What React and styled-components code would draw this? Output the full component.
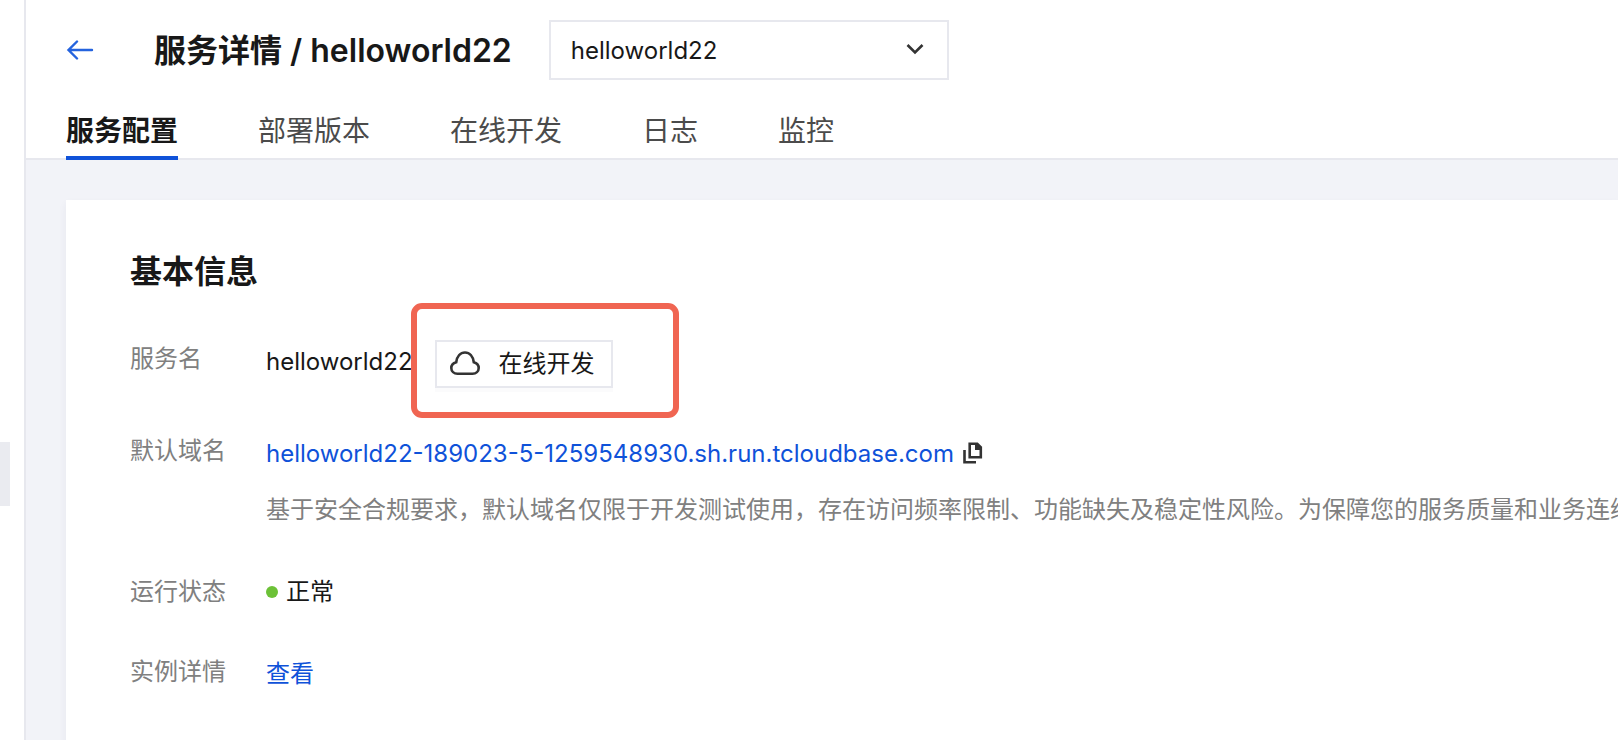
import React from 'react';
import styled, { createGlobalStyle } from 'styled-components';

const colors = {
  blue: '#0f52d9',
  text: '#181818',
  tab: '#4b4b4b',
  muted: '#808080',
  line: '#e7e8ee',
  page: '#f2f3f8',
  green: '#6cc137',
  mark: '#f06552',
};

const GlobalStyle = createGlobalStyle`
  * {
    box-sizing: border-box;
  }

  body {
    background: #fff;
    color: ${colors.text};
    font-family: Inter, "Noto Sans CJK SC", sans-serif;
    font-size: 24px;
    line-height: 40px;
    margin: 0;
    overflow-x: hidden;
  }

  button, select {
    color: inherit;
    font: inherit;
  }
`;

const Page = styled.div`
  display: flex;
  min-height: 100vh;
`;

const Sidebar = styled.aside`
  background: #fff;
  border-right: 2px solid ${colors.line};
  flex: 0 0 26px;
  padding-top: 442px;
`;

const SidebarItem = styled.div`
  background: #eaebf0;
  height: 64px;
  width: 10px;
`;

const Main = styled.div`
  background: ${colors.page};
  display: flex;
  flex: 1;
  flex-direction: column;
  min-width: 0;
`;

const Header = styled.header`
  background: #fff;
  border-bottom: 2px solid ${colors.line};
  padding: 20px 40px 0;
`;

const TitleRow = styled.div`
  align-items: center;
  display: flex;
`;

const BackLink = styled.a`
  color: #2463de;
  display: flex;
  margin-right: 60px;
`;

const Title = styled.h1`
  font-size: 32px;
  font-weight: 600;
  margin: 0 37px 0 0;
  padding-top: 2px;
  white-space: nowrap;
`;

const SelectBox = styled.div`
  position: relative;
  width: 400px;

  svg {
    pointer-events: none;
    position: absolute;
    right: 25px;
    top: 22px;
  }
`;

const Select = styled.select`
  appearance: none;
  background: #fff;
  border: 2px solid ${colors.line};
  border-radius: 0;
  height: 60px;
  padding: 2px 60px 0 20px;
  width: 100%;
`;

const Tabs = styled.nav`
  display: flex;
  gap: 80px;
  margin: 28px 0 -2px;
`;

const Tab = styled.a`
  border-bottom: 4px solid ${(props) => (props.$active ? colors.blue : 'transparent')};
  color: ${(props) => (props.$active ? colors.text : colors.tab)};
  font-size: 28px;
  font-weight: ${(props) => (props.$active ? 700 : 400)};
  height: 52px;
  line-height: 46px;
  text-decoration: none;
`;

const Card = styled.section`
  background: #fff;
  box-shadow: 0 4px 8px rgba(54, 58, 80, .06);
  flex: 1;
  margin: 40px 0 0 40px;
  overflow: hidden;
  padding: 52px 0 40px 64px;
`;

const CardTitle = styled.h2`
  font-size: 32px;
  font-weight: 700;
  margin: 0 0 47px;
`;

const List = styled.dl`
  margin: 0;
`;

const Row = styled.div`
  display: flex;
  margin-bottom: ${(props) => props.$gap || 40}px;
`;

const Label = styled.dt`
  color: ${colors.muted};
  flex: 0 0 136px;
`;

const Value = styled.dd`
  margin: 0;
  padding-top: ${(props) => props.$top || 0}px;
`;

const Inline = styled.div`
  align-items: ${(props) => props.$align || 'center'};
  display: flex;
`;

const ServiceName = styled.span`
  line-height: 44px;
`;

const Link = styled.a`
  color: ${colors.blue};
  display: block;
  text-decoration: none;
`;

const CopyButton = styled.button`
  background: none;
  border: 0;
  display: flex;
  margin-left: 9px;
  padding: 0 0 2px;
`;

const Hint = styled.p`
  color: ${colors.muted};
  margin: 16px 0 0;
  white-space: nowrap;
`;

const Marked = styled.div`
  margin-left: 22px;
  position: relative;

  &::after {
    border: 6px solid ${colors.mark};
    border-radius: 11px;
    content: '';
    inset: -37px -66px -30px -24px;
    pointer-events: none;
    position: absolute;
  }
`;

const DevButton = styled.button`
  align-items: center;
  background: #fff;
  border: 2px solid ${colors.line};
  box-shadow: 0 4px 0 #fbfbfc;
  display: flex;
  gap: 18px;
  height: 48px;
  padding: 0 16px 0 12px;
  white-space: nowrap;
`;

const Dot = styled.span`
  background: ${colors.green};
  border-radius: 50%;
  height: 12px;
  margin-right: 8px;
  width: 12px;
`;

const tabs = ['服务配置', '部署版本', '在线开发', '日志', '监控'];

function BackIcon() {
  return (
    <svg width="28" height="20" viewBox="0 0 28 20" fill="none" stroke="currentColor" strokeWidth="2.4" strokeLinecap="round" aria-hidden="true">
      <path d="M26 10H3M11 1.500L2.500 10l8.500 8.500" />
    </svg>
  );
}

function ChevronIcon() {
  return (
    <svg width="18" height="14" viewBox="0 0 18 14" fill="none" stroke="#333" strokeWidth="2.6" aria-hidden="true">
      <path d="M1.500 3L9 10.500 16.500 3" />
    </svg>
  );
}

function CloudIcon() {
  return (
    <svg width="32" height="26" viewBox="0 0 32 26" fill="none" stroke="#333" strokeWidth="2.6" aria-hidden="true">
      <path d="M8.500 22.800h15c3.600 0 6.200-2.500 6.200-5.700 0-2.900-1.800-5-4.900-5.800C24 5.500 20.600 1.500 16 1.500S8 5.500 7.200 11.300c-3.100.8-4.900 2.900-4.900 5.800 0 3.200 2.600 5.700 6.200 5.700z" />
    </svg>
  );
}

function CopyIcon() {
  return (
    <svg width="20" height="22" viewBox="0 0 20 22" fill="none" stroke="#333" strokeWidth="2.6" aria-hidden="true">
      <path d="M6.700 1.700h7.500l3.600 3.600v10H6.700z" />
      <path d="M12 1.500h2l4 4v2.500h-6z" fill="#333" stroke="none" />
      <path d="M1.500 8v12.200h11.500" />
    </svg>
  );
}

function ServiceHeader() {
  return (
    <Header>
      <TitleRow>
        <BackLink href="#services" aria-label="返回"><BackIcon /></BackLink>
        <Title>服务详情 / helloworld22</Title>
        <SelectBox>
          <Select aria-label="服务" defaultValue="helloworld22">
            <option value="helloworld22">helloworld22</option>
          </Select>
          <ChevronIcon />
        </SelectBox>
      </TitleRow>
      <Tabs>
        {tabs.map((tab, i) => (
          <Tab key={tab} href={`#tab-${i}`} $active={i === 0}>{tab}</Tab>
        ))}
      </Tabs>
    </Header>
  );
}

function BasicInfo() {
  return (
    <Card>
      <CardTitle>基本信息</CardTitle>
      <List>
        <Row $gap={43}>
          <Label>服务名</Label>
          <Value $top={1}>
            <Inline $align="flex-start">
              <ServiceName>helloworld22</ServiceName>
              <Marked>
                <DevButton type="button">
                  <CloudIcon />
                  在线开发
                </DevButton>
              </Marked>
            </Inline>
          </Value>
        </Row>
        <Row $gap={42}>
          <Label>默认域名</Label>
          <Value $top={3}>
            <Inline>
              <Link href="#domain">helloworld22-189023-5-1259548930.sh.run.tcloudbase.com</Link>
              <CopyButton type="button" aria-label="复制"><CopyIcon /></CopyButton>
            </Inline>
            <Hint>基于安全合规要求，默认域名仅限于开发测试使用，存在访问频率限制、功能缺失及稳定性风险。为保障您的服务质量和业务连续</Hint>
          </Value>
        </Row>
        <Row>
          <Label>运行状态</Label>
          <Value>
            <Inline>
              <Dot />
              正常
            </Inline>
          </Value>
        </Row>
        <Row>
          <Label>实例详情</Label>
          <Value $top={2}><Link href="#instances">查看</Link></Value>
        </Row>
      </List>
    </Card>
  );
}

function App() {
  return (
    <>
      <GlobalStyle />
      <Page lang="zh-CN">
        <Sidebar><SidebarItem /></Sidebar>
        <Main>
          <ServiceHeader />
          <BasicInfo />
        </Main>
      </Page>
    </>
  );
}

export default App;
